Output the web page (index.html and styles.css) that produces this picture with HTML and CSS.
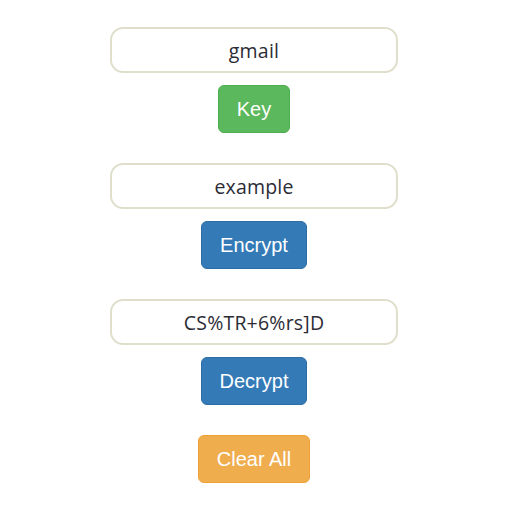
FILE: index.html
```html
<!DOCTYPE html>
<html>
<head>
<meta charset="utf-8">
<link rel="stylesheet" href="styles.css">
</head>
<body>
<main class="app">
  <section class="group">
    <input class="field" type="text" value="gmail">
    <button class="btn btn-success">Key</button>
  </section>
  <section class="group">
    <input class="field" type="text" value="example">
    <button class="btn btn-primary">Encrypt</button>
  </section>
  <section class="group">
    <input class="field" type="text" value="CS%TR+6%rs]D">
    <button class="btn btn-primary">Decrypt</button>
  </section>
  <section class="group">
    <button class="btn btn-warning">Clear All</button>
  </section>
</main>
</body>
</html>
```
FILE: styles.css
```css
html, body {
  margin: 0;
  padding: 0;
  background: #ffffff;
}
.app {
  width: 508px;
  padding-top: 27px;
  display: flex;
  flex-direction: column;
  align-items: center;
  gap: 30px;
}
.group {
  display: flex;
  flex-direction: column;
  align-items: center;
  gap: 12px;
}
.field {
  box-sizing: border-box;
  width: 288px;
  height: 46px;
  border: 2px solid #e0dfcc;
  border-radius: 13px;
  background: #fff;
  text-align: center;
  font-family: "Open Sans", "Liberation Sans", sans-serif;
  font-size: 19.5px;
  color: #2c2c36;
  letter-spacing: 0.2px;
  padding: 0 10px;
  outline: none;
}
.btn {
  box-sizing: border-box;
  height: 48px;
  padding: 0 18px;
  border: 1px solid transparent;
  border-radius: 6px;
  font-family: "Liberation Sans", Arial, sans-serif;
  font-size: 20px;
  line-height: 24px;
  color: #fff;
  cursor: pointer;
}
.btn-success {
  background: #5cb85c;
  border-color: #4cae4c;
}
.btn-primary {
  background: #337ab7;
  border-color: #2e6da4;
}
.btn-warning {
  background: #f0ad4e;
  border-color: #eea236;
}
```
